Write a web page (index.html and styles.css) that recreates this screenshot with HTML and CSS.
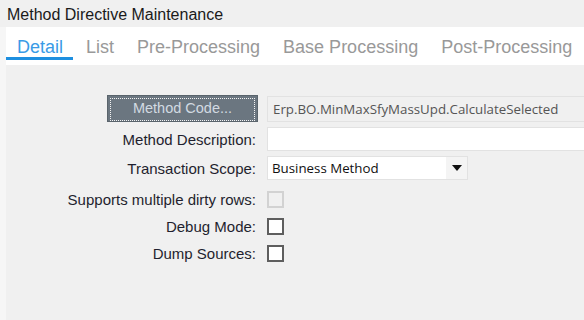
FILE: index.html
```html
<!DOCTYPE html>
<html lang="en">
<head>
    <meta charset="UTF-8">
    <meta name="viewport" content="width=device-width, initial-scale=1.0">
    <title>Method Directive Maintenance</title>
    <link rel="stylesheet" href="styles.css">
</head>
<body>
    <div class="titlebar">Method Directive Maintenance</div>
    <div class="frame">
        <nav class="tabs">
            <span class="tab active">Detail</span>
            <span class="tab">List</span>
            <span class="tab">Pre-Processing</span>
            <span class="tab">Base Processing</span>
            <span class="tab">Post-Processing</span>
        </nav>
        <div class="detail">
            <div class="row field-row tall">
                <button class="code-btn"><span>Method Code...</span></button>
                <div class="field readonly">Erp.BO.MinMaxSfyMassUpd.CalculateSelected</div>
            </div>
            <div class="row field-row">
                <label>Method Description:</label>
                <div class="field"></div>
            </div>
            <div class="row field-row">
                <label>Transaction Scope:</label>
                <div class="select">
                    <span class="select-value">Business Method</span>
                    <span class="select-arrow">
                        <svg width="10" height="6" viewBox="0 0 10 6"><path d="M0 0 H10 L5 6 Z" fill="#111"/></svg>
                    </span>
                </div>
            </div>
            <div class="checks">
                <div class="row check-row">
                    <label>Supports multiple dirty rows:</label>
                    <span class="check disabled"></span>
                </div>
                <div class="row check-row">
                    <label>Debug Mode:</label>
                    <span class="check"></span>
                </div>
                <div class="row check-row">
                    <label>Dump Sources:</label>
                    <span class="check"></span>
                </div>
            </div>
        </div>
    </div>
</body>
</html>
```

FILE: styles.css
```css
body {
    margin: 0;
    padding: 0;
    background-color: #f6f6f6;
    font-family: "Liberation Sans", Arial, sans-serif;
    color: #1f1f2e;
    height: 320px;
    overflow: hidden;
}
.titlebar {
    height: 27px;
    background: #f0f0f0;
    font-size: 16px;
    line-height: 27px;
    padding-left: 7px;
    color: #1a1a1a;
    box-sizing: border-box;
    padding-top: 1px;
}
.frame {
    padding-left: 6px;
}
.tabs {
    display: flex;
    gap: 2px;
    height: 38px;
    background: #fff;
}
.tab {
    height: 33px;
    box-sizing: border-box;
    padding: 9px 10px 0 11px;
    font-size: 18px;
    line-height: 22px;
    color: #999;
    border-bottom: 3px solid transparent;
    white-space: nowrap;
}
.tab.active {
    color: #3a9be6;
    border-bottom-color: #1e8fe0;
}
.detail {
    background: #f0f0f0;
    padding-top: 30px;
    height: 255px;
    box-sizing: border-box;
    overflow: hidden;
}
.row {
    display: grid;
    grid-template-columns: 250px 1fr;
    column-gap: 11px;
    align-items: center;
}
.row label {
    text-align: right;
    font-size: 15px;
    white-space: nowrap;
}
.field-row {
    height: 24px;
    margin-bottom: 5px;
}
.field-row.tall {
    height: 26px;
    margin-bottom: 6px;
}
.code-btn {
    justify-self: end;
    margin-right: -2px;
    width: 151px;
    height: 27px;
    padding: 2px;
    background: #6b7680;
    border: 1px solid #5a646c;
    font-family: "Liberation Sans", Arial, sans-serif;
    font-size: 14.5px;
    color: #d2dae2;
}
.code-btn span {
    display: block;
    height: 100%;
    line-height: 19px;
    border: 1px dotted #f4f4f4;
}
.field {
    height: 24px;
    box-sizing: border-box;
    background: #fff;
    border: 1px solid #e2e2e2;
    border-right: none;
    margin-right: -10px;
    font-family: "Open Sans", "Liberation Sans", sans-serif;
    font-size: 13.3px;
    line-height: 22px;
    padding-left: 5px;
    white-space: nowrap;
}
.field.readonly {
    height: 26px;
    line-height: 24px;
    background: #f0f0f0;
    color: #555;
}
.select {
    display: flex;
    width: 201px;
    height: 24px;
    box-sizing: border-box;
    border: 1px solid #e2e2e2;
    background: #fff;
}
.select-value {
    flex: 1;
    font-family: "Open Sans", "Liberation Sans", sans-serif;
    font-size: 13.3px;
    line-height: 22px;
    padding-left: 4px;
    color: #111;
}
.select-arrow {
    width: 21px;
    background: #f4f4f4;
    display: flex;
    align-items: center;
    justify-content: center;
}
.checks {
    padding-top: 1px;
}
.check-row {
    height: 27px;
}
.check {
    width: 17px;
    height: 17px;
    box-sizing: border-box;
    border: 2px solid #5e5e5e;
    background: #fff;
}
.check.disabled {
    border-color: #d2d2d2;
    background: #f0f0f0;
}
```
